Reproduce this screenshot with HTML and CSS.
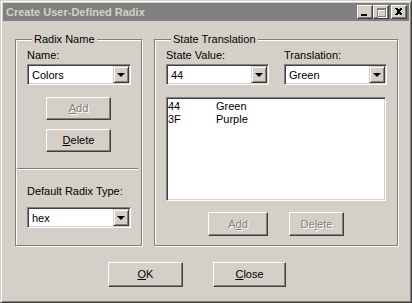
FILE: index.html
```html
<!DOCTYPE html>
<html lang="en">
<head>
    <meta charset="UTF-8">
    <title>Create User-Defined Radix</title>
    <link rel="stylesheet" href="styles.css">
</head>
<body>
    <div class="window">
        <div class="titlebar">
            <span class="title">Create User-Defined Radix</span>
            <div class="caption-buttons">
                <span class="cap-btn">
                    <svg width="14" height="12" viewBox="0 0 14 12" shape-rendering="crispEdges"><rect x="3" y="8" width="6" height="2" fill="#000"/></svg>
                </span>
                <span class="cap-btn">
                    <svg width="14" height="12" viewBox="0 0 14 12" shape-rendering="crispEdges">
                        <path d="M3 2h9v9h-9z M4 4v6h7v-6z" fill="#fff" transform="translate(1 1)" fill-rule="evenodd"/>
                        <path d="M3 2h9v9h-9z M4 4v6h7v-6z" fill="#808080" fill-rule="evenodd"/>
                    </svg>
                </span>
                <span class="cap-btn close">
                    <svg width="14" height="12" viewBox="0 0 14 12" shape-rendering="crispEdges">
                        <path d="M3 2h2l1 1h1l1-1h2v1l-2 2v1l2 2v1h-2l-1-1h-1l-1 1h-2v-1l2-2v-1l-2-2z" fill="#000"/>
                    </svg>
                </span>
            </div>
        </div>

        <div class="client">
            <div class="groups">
                <fieldset class="group group-radix">
                    <legend>Radix Name</legend>
                    <div class="field-label first">Name:</div>
                    <div class="combo combo-name">
                        <span class="combo-text">Colors</span>
                        <span class="combo-btn"><span class="arrow"></span></span>
                    </div>
                    <div class="btn-stack">
                        <button class="btn btn-small" disabled><u>A</u>dd</button>
                        <button class="btn btn-small"><u>D</u>elete</button>
                    </div>
                    <div class="separator"></div>
                    <div class="field-label type-label">Default Radix Type:</div>
                    <div class="combo combo-name">
                        <span class="combo-text">hex</span>
                        <span class="combo-btn"><span class="arrow"></span></span>
                    </div>
                </fieldset>

                <fieldset class="group group-state">
                    <legend>State Translation</legend>
                    <div class="state-row">
                        <div class="state-col">
                            <div class="field-label first">State Value:</div>
                            <div class="combo combo-state">
                                <span class="combo-text">44</span>
                                <span class="combo-btn"><span class="arrow"></span></span>
                            </div>
                        </div>
                        <div class="state-col">
                            <div class="field-label first">Translation:</div>
                            <div class="combo combo-state">
                                <span class="combo-text">Green</span>
                                <span class="combo-btn"><span class="arrow"></span></span>
                            </div>
                        </div>
                    </div>
                    <div class="listbox">
                        <div class="list-row"><span class="col-value">44</span><span>Green</span></div>
                        <div class="list-row"><span class="col-value">3F</span><span>Purple</span></div>
                    </div>
                    <div class="state-buttons">
                        <button class="btn btn-add" disabled>A<u>d</u>d</button>
                        <button class="btn btn-delete" disabled>De<u>l</u>ete</button>
                    </div>
                </fieldset>
            </div>

            <div class="dialog-buttons">
                <button class="btn btn-ok"><u>O</u>K</button>
                <button class="btn btn-close"><u>C</u>lose</button>
            </div>
        </div>
    </div>
</body>
</html>
```

FILE: styles.css
```css
* {
    margin: 0;
    padding: 0;
    box-sizing: border-box;
}

body {
    background: #d4d0c8;
    font-family: 'Liberation Sans', Arial, sans-serif;
    font-size: 11px;
    line-height: 13px;
    color: #000;
}

.window {
    width: 412px;
    height: 303px;
    padding: 2px;
    background: #d4d0c8;
    border: 1px solid;
    border-color: #d4d0c8 #404040 #404040 #d4d0c8;
    box-shadow: inset 1px 1px #fff, inset -1px -1px #808080;
}

/* title bar */
.titlebar {
    height: 18px;
    background: #808080;
    display: flex;
    align-items: center;
    justify-content: space-between;
    padding: 0 2px 0 3px;
}

.title {
    color: #d4d0c8;
    font-weight: bold;
    font-size: 11px;
}

.caption-buttons {
    display: flex;
}

.cap-btn {
    width: 16px;
    height: 14px;
    background: #d4d0c8;
    border: 1px solid;
    border-color: #fff #404040 #404040 #fff;
    box-shadow: inset -1px -1px #808080;
    display: block;
}

.cap-btn svg {
    display: block;
}

.cap-btn.close {
    margin-left: 2px;
}

/* client area */
.client {
    padding: 12px 0 0 12px;
}

.groups {
    display: flex;
    gap: 12px;
}

.group {
    border: 1px solid #808080;
    box-shadow: inset 1px 1px #fff, 1px 1px #fff;
    height: 213px;
    padding: 0 11px;
    min-width: 0;
}

.group legend {
    margin-left: 5px;
    padding: 0 2px;
    background: #d4d0c8;
    line-height: 13px;
}

.group-radix {
    width: 127px;
}

.group-state {
    width: 244px;
}

.field-label {
    height: 13px;
    white-space: nowrap;
}

.field-label.first {
    margin-top: 3px;
}

/* combo box */
.combo {
    margin-top: 2px;
    height: 21px;
    background: #fff;
    border: 1px solid;
    border-color: #808080 #fff #fff #808080;
    box-shadow: inset 1px 1px #404040, inset -1px -1px #d4d0c8;
    padding: 1px;
    display: flex;
    justify-content: space-between;
}

.combo-name {
    width: 104px;
}

.combo-state {
    width: 103px;
}

.combo-text {
    padding: 3px 0 0 3px;
}

.combo-btn {
    width: 16px;
    height: 17px;
    background: #d4d0c8;
    border: 1px solid;
    border-color: #d4d0c8 #404040 #404040 #d4d0c8;
    box-shadow: inset 1px 1px #fff, inset -1px -1px #808080;
    display: flex;
    align-items: center;
    justify-content: center;
}

.arrow {
    width: 0;
    height: 0;
    border-left: 4px solid transparent;
    border-right: 4px solid transparent;
    border-top: 4px solid #000;
    margin-top: 1px;
}

/* buttons */
.btn {
    font-family: inherit;
    font-size: 11px;
    line-height: 13px;
    color: #000;
    background: #d4d0c8;
    border: 1px solid;
    border-color: #fff #404040 #404040 #fff;
    box-shadow: inset -1px -1px #808080;
    display: block;
}

.btn:disabled {
    color: #808080;
    text-shadow: 1px 1px #fff;
}

.btn-stack {
    display: flex;
    flex-direction: column;
    align-items: center;
    gap: 9px;
    margin-top: 12px;
}

.btn-small {
    width: 65px;
    height: 23px;
}

.separator {
    margin: 16px 0 0 -10px;
    width: 121px;
    height: 2px;
    border-top: 1px solid #808080;
    border-bottom: 1px solid #fff;
}

.type-label {
    margin-top: 15px;
}

.group-radix .combo:last-child {
    margin-top: 9px;
}

/* state translation */
.state-row {
    display: flex;
    gap: 15px;
}

.listbox {
    margin-top: 12px;
    width: 220px;
    height: 104px;
    background: #fff;
    border: 1px solid;
    border-color: #808080 #fff #fff #808080;
    box-shadow: inset 1px 1px #404040, inset -1px -1px #d4d0c8;
    padding: 2px 1px;
}

.list-row {
    display: flex;
    height: 13px;
}

.col-value {
    width: 48px;
}

.state-buttons {
    display: flex;
    justify-content: center;
    gap: 21px;
    margin-top: 11px;
}

.btn-add {
    width: 60px;
    height: 24px;
}

.btn-delete {
    width: 55px;
    height: 24px;
}

/* bottom buttons */
.dialog-buttons {
    display: flex;
    gap: 30px;
    margin-top: 16px;
    padding-left: 93px;
}

.btn-ok {
    width: 75px;
    height: 25px;
}

.btn-close {
    width: 73px;
    height: 25px;
}
```
